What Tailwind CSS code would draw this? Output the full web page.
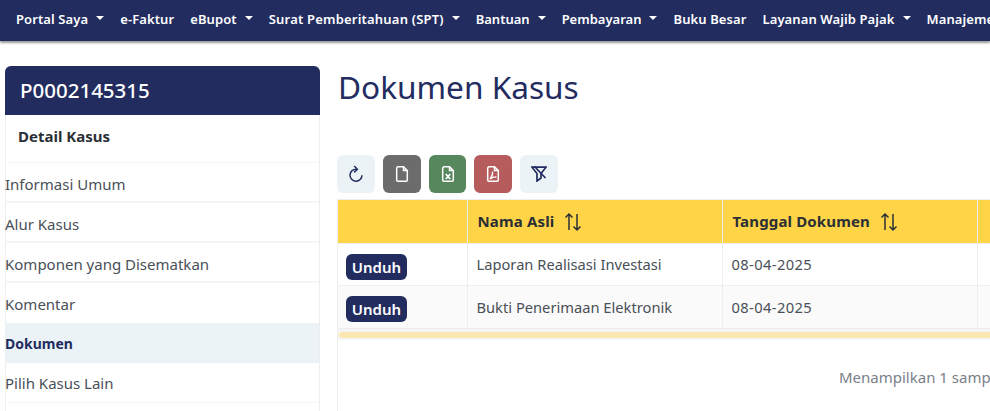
<!DOCTYPE html>
<html lang="id">
<head>
  <meta charset="UTF-8">
  <title>Dokumen Kasus</title>
  <script src="https://cdn.jsdelivr.net/npm/@tailwindcss/browser@4"></script>
</head>
<body class="w-[990px] h-[411px] overflow-hidden bg-white font-['Noto_Sans',sans-serif] text-[#495057]">
  <!-- navbar -->
  <nav class="h-[41px] w-full bg-[#222c5f] shadow-[0_2px_2px_rgba(0,0,0,0.4)] flex items-center pl-4 pb-px gap-4 text-[13px] tracking-[0.1px] font-semibold text-white whitespace-nowrap overflow-hidden relative z-10">
    <a class="flex items-center gap-2">Portal Saya <span class="mb-1 border-x-[4px] border-x-transparent border-t-[4px] border-t-white"></span></a>
    <a>e-Faktur</a>
    <a class="flex items-center gap-2">eBupot <span class="mb-1 border-x-[4px] border-x-transparent border-t-[4px] border-t-white"></span></a>
    <a class="flex items-center gap-2 tracking-[0.2px]">Surat Pemberitahuan (SPT) <span class="mb-1 border-x-[4px] border-x-transparent border-t-[4px] border-t-white"></span></a>
    <a class="flex items-center gap-2 tracking-normal">Bantuan <span class="mb-1 border-x-[4px] border-x-transparent border-t-[4px] border-t-white"></span></a>
    <a class="flex items-center gap-2 tracking-normal">Pembayaran <span class="mb-1 border-x-[4px] border-x-transparent border-t-[4px] border-t-white"></span></a>
    <a>Buku Besar</a>
    <a class="flex items-center gap-2">Layanan Wajib Pajak <span class="mb-1 border-x-[4px] border-x-transparent border-t-[4px] border-t-white"></span></a>
    <a>Manajemen</a>
  </nav>

  <div class="flex pl-[5px] pt-[25px] gap-[17px]">
    <!-- sidebar -->
    <aside class="w-[315px] shrink-0 h-[360px] rounded-t-md border border-[#eeeeee] border-b-0">
      <div class="-mx-px -mt-px h-[49px] rounded-t-md bg-[#222c5f] text-white text-[20.5px] font-medium flex items-center pl-[15px]">P0002145315</div>
      <div class="h-[48px] pl-[12px] pt-[10px] text-[15px] font-bold text-[#2b2f36] border-b border-[#f5f5f5]">Detail Kasus</div>
      <ul class="-ml-px text-[15px]">
        <li class="h-[40px] flex items-center pt-[4px] border-b-2 border-[#f5f5f5]">Informasi Umum</li>
        <li class="h-[40px] flex items-center pt-[4px] border-b-2 border-[#f5f5f5]">Alur Kasus</li>
        <li class="h-[40px] flex items-center pt-[4px] border-b-2 border-[#f5f5f5]">Komponen yang Disematkan</li>
        <li class="h-[40px] flex items-center pt-[2px]">Komentar</li>
        <li class="h-[40px] flex items-center bg-[#ebf3f6] font-bold text-[#222c5f] text-[14px]">Dokumen</li>
        <li class="h-[40px] flex items-center pt-[2px] border-b border-[#f5f5f5]">Pilih Kasus Lain</li>
      </ul>
    </aside>

    <!-- main -->
    <main class="w-[800px] shrink-0">
      <h1 class="h-[89px] pl-px text-[31.6px] leading-[42px] text-[#222c5f]">Dokumen Kasus</h1>
      <div class="flex gap-2 h-[44px]">
        <span class="w-[38px] h-[38px] rounded-md bg-[#ebf3f6] flex items-center justify-center">
          <svg class="w-4 h-[18px]" viewBox="0 0 16 18" fill="none" stroke="#222c5f" stroke-width="1.5"><path d="M8.500 4.200A6 6 0 1 0 14 10.200"/><path d="M6.200 1l3.200 3.200-3.200 3.200"/></svg>
        </span>
        <span class="w-[38px] h-[38px] rounded-md bg-[#6c6c6c] flex items-center justify-center">
          <svg class="w-4 h-4" viewBox="0 0 16 16" fill="none" stroke="#fff" stroke-width="1.5"><path d="M9.500.8H4A1.300 1.300 0 0 0 2.700 2.100v11.800A1.300 1.300 0 0 0 4 15.200h8a1.300 1.300 0 0 0 1.300-1.300V4.600z"/><path d="M9.500.8v3.800h3.800"/></svg>
        </span>
        <span class="w-[37px] h-[38px] rounded-md bg-[#57875c] flex items-center justify-center">
          <svg class="w-4 h-4" viewBox="0 0 16 16" fill="none" stroke="#fff" stroke-width="1.5"><path d="M9.500.8H4A1.300 1.300 0 0 0 2.700 2.100v11.800A1.300 1.300 0 0 0 4 15.200h8a1.300 1.300 0 0 0 1.300-1.300V4.600z"/><path d="M9.500.8v3.800h3.800"/><path d="M5.800 8l4.400 5M10.200 8l-4.400 5" stroke-width="1.800"/></svg>
        </span>
        <span class="w-[38px] h-[38px] rounded-md bg-[#b65c5c] flex items-center justify-center">
          <svg class="w-4 h-4" viewBox="0 0 16 16" fill="none" stroke="#fff" stroke-width="1.5"><path d="M9.500.8H4A1.300 1.300 0 0 0 2.700 2.100v11.800A1.300 1.300 0 0 0 4 15.200h8a1.300 1.300 0 0 0 1.300-1.300V4.600z"/><path d="M9.500.8v3.800h3.800"/><path d="M7.500 5.500c.4 2.500-.3 4.800-2.500 7.500 1.800-1.400 4-2.300 6.500-2.200" stroke-width="1.300"/></svg>
        </span>
        <span class="w-[38px] h-[38px] rounded-md bg-[#ebf3f6] flex items-center justify-center">
          <svg class="w-4 h-4" viewBox="0 0 16 16" fill="none" stroke="#222c5f" stroke-width="1.7"><path d="M1 1.200h14L10 7.500v4.500l-4 3V7.500z"/><path d="M3.500.5l11 11.500"/></svg>
        </span>
      </div>
      <div class="border-l border-[#eeeeee] h-[230px]">
        <table class="table-fixed w-[800px] border-collapse text-[14.7px]">
          <colgroup><col class="w-[129px]"><col class="w-[255px]"><col class="w-[255px]"><col></colgroup>
          <thead class="bg-[#ffd447] text-[#2b2f36] text-[15px] tracking-[0.15px]">
            <tr class="h-[44px]">
              <th class="border border-[#eeeeee] border-l-0"></th>
              <th class="border border-[#eeeeee] text-left pl-[10px] font-bold"><span class="flex items-center gap-[10px]">Nama Asli <svg class="w-[18px] h-[20px]" viewBox="0 0 18 20" fill="none" stroke="#2b2f36" stroke-width="1.500"><path d="M5 18V2M1.500 5.500L5 2l3.500 3.500M13 2v16M9.500 14.500L13 18l3.500-3.500"/></svg></span></th>
              <th class="border border-[#eeeeee] text-left pl-[10px] font-bold"><span class="flex items-center gap-[10px]">Tanggal Dokumen <svg class="w-[18px] h-[20px]" viewBox="0 0 18 20" fill="none" stroke="#2b2f36" stroke-width="1.500"><path d="M5 18V2M1.500 5.500L5 2l3.500 3.500M13 2v16M9.500 14.500L13 18l3.500-3.500"/></svg></span></th>
              <th class="border border-[#eeeeee] text-left pl-[10px] font-bold"></th>
            </tr>
          </thead>
          <tbody>
            <tr class="h-[42px]">
              <td class="border border-[#eeeeee] border-l-0 pl-2 pt-1"><span class="inline-block w-[61px] h-[26px] leading-[26px] text-center rounded-md bg-[#222c5f] text-white font-semibold text-[15px]">Unduh</span></td>
              <td class="border border-[#eeeeee] pl-[9px]">Laporan Realisasi Investasi</td>
              <td class="border border-[#eeeeee] pl-[9px] tracking-[0.4px]">08-04-2025</td>
              <td class="border border-[#eeeeee]"></td>
            </tr>
            <tr class="h-[43px] bg-[#fafafa]">
              <td class="border border-[#eeeeee] border-l-0 pl-2 pt-1"><span class="inline-block w-[61px] h-[26px] leading-[26px] text-center rounded-md bg-[#222c5f] text-white font-semibold text-[15px]">Unduh</span></td>
              <td class="border border-[#eeeeee] pl-[9px]">Bukti Penerimaan Elektronik</td>
              <td class="border border-[#eeeeee] pl-[9px] tracking-[0.4px]">08-04-2025</td>
              <td class="border border-[#eeeeee]"></td>
            </tr>
          </tbody>
        </table>
        <div class="h-[11px] bg-[#f5f5f5] pt-[3px]"><div class="h-[6px] ml-px rounded-full bg-[#fbe7b0]"></div></div>
        <p class="mt-[26px] pl-[501px] text-[15px] text-[#7a8089] whitespace-nowrap">Menampilkan 1 sampai 2 dari 2 data</p>
      </div>
    </main>
  </div>
</body>
</html>
